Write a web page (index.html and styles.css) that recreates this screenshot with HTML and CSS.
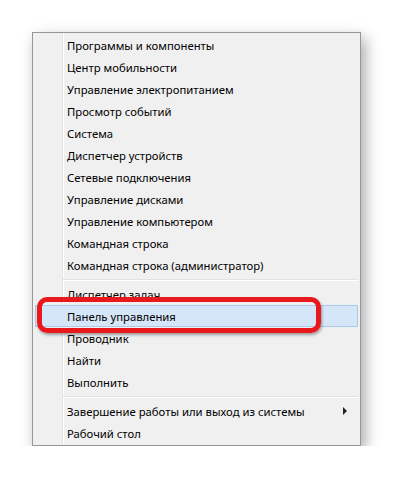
FILE: index.html
```html
<!DOCTYPE html>
<html lang="ru">
<head>
  <meta charset="UTF-8">
  <meta name="viewport" content="width=device-width, initial-scale=1.0">
  <title>Меню Win+X</title>
  <link rel="stylesheet" href="styles.css">
</head>
<body>
  <div class="menu">
    <div class="item">Программы и компоненты</div>
    <div class="item">Центр мобильности</div>
    <div class="item">Управление электропитанием</div>
    <div class="item">Просмотр событий</div>
    <div class="item">Система</div>
    <div class="item">Диспетчер устройств</div>
    <div class="item">Сетевые подключения</div>
    <div class="item">Управление дисками</div>
    <div class="item">Управление компьютером</div>
    <div class="item">Командная строка</div>
    <div class="item">Командная строка (администратор)</div>
    <div class="separator"></div>
    <div class="item">Диспетчер задач</div>
    <div class="item selected">Панель управления</div>
    <div class="item">Проводник</div>
    <div class="item">Найти</div>
    <div class="item">Выполнить</div>
    <div class="separator"></div>
    <div class="item has-sub">Завершение работы или выход из системы <span class="arrow"></span></div>
    <div class="item">Рабочий стол</div>
  </div>
  <div class="marker"></div>
</body>
</html>
```

FILE: styles.css
```css
body {
  margin: 0;
  background: #fff;
  font-family: "Noto Sans", "Open Sans", sans-serif;
  font-size: 11.3px;
  color: #000;
}

.menu {
  margin: 32px 0 0 32px;
  width: 327px;
  padding: 1px 0 1px;
  border: 1px solid #979797;
  background-color: #f0f0f0;
  background-image: linear-gradient(to right, transparent 29px, #e2e3e3 29px, #e2e3e3 30px, #fff 30px, #fff 31px, transparent 31px);
  box-shadow: 4px 6px 14px rgba(0, 0, 0, 0.35);
}

.item {
  display: flex;
  align-items: center;
  height: 20px;
  margin: 0 2px;
  padding-left: 31px;
  border: 1px solid transparent;
  white-space: nowrap;
}

.item.selected {
  background: #d5e6f8;
  border-color: #a9c9ee;
}

.has-sub {
  justify-content: space-between;
  padding-right: 10px;
}

.arrow {
  width: 0;
  height: 0;
  border-top: 4px solid transparent;
  border-bottom: 4px solid transparent;
  border-left: 4px solid #222;
}

.separator {
  height: 1px;
  margin: 3px 2px 2px 30px;
  background: #e2e3e3;
  border-bottom: 1px solid #fff;
}

.marker {
  position: absolute;
  left: 37px;
  top: 297px;
  width: 274px;
  height: 26px;
  border: 5px solid #e8181d;
  border-radius: 10px;
  box-shadow: 1px 2px 3px rgba(0, 0, 0, 0.35);
}
```
